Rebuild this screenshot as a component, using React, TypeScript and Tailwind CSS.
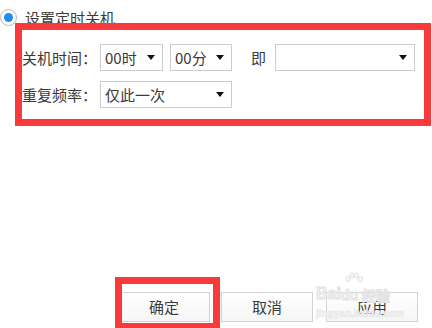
import React from "react";

const font = { fontFamily: '"Noto Sans CJK SC", "Noto Sans", sans-serif' };

function Arrow() {
  return (
    <svg width="8" height="5" viewBox="0 0 8 5" className="shrink-0">
      <path d="M0 0 H8 L4 5 Z" fill="#111" />
    </svg>
  );
}

function Select({ text, w }: { text: string; w: string }) {
  return (
    <div
      className={`${w} h-[27px] border border-[#cdcdcd] bg-white flex items-center justify-between pl-[4px] pr-[7px] text-[15px] text-[#3a3a3a]`}
    >
      <span className="leading-none">{text}</span>
      <Arrow />
    </div>
  );
}

function Btn({ label, cls }: { label: string; cls: string }) {
  return (
    <div
      className={`${cls} w-[92px] h-[30px] border border-[#d2d2d2] bg-gradient-to-b from-white to-[#f6f6f6] flex items-center justify-center text-[15px] text-[#3a3a3a]`}
    >
      {label}
    </div>
  );
}

export default function App() {
  const stroke = { WebkitTextStroke: "1px #e2e2e2" } as React.CSSProperties;
  return (
    <div
      className="relative w-[432px] h-[328px] bg-white overflow-hidden flex flex-col pt-[9px]"
      style={font}
    >
      {/* radio row */}
      <div className="flex items-center h-[17px]">
        <div className="w-[17px] h-[17px] rounded-full border border-[#b9b9b9] bg-white flex items-center justify-center">
          <div className="w-[9px] h-[9px] rounded-full bg-[#1c8ff0]" />
        </div>
        <span className="ml-[8px] text-[15px] text-[#3a3a3a] leading-none">设置定时关机</span>
      </div>

      {/* row 1 */}
      <div className="flex items-center h-[27px] mt-[18px] pl-[22px] text-[15px] text-[#3a3a3a]">
        <span className="w-[78px] leading-none">关机时间：</span>
        <Select text="00时" w="w-[63px]" />
        <div className="ml-[7px]">
          <Select text="00分" w="w-[62px]" />
        </div>
        <span className="ml-[19px] w-[24px] leading-none">即</span>
        <Select text="" w="w-[140px]" />
      </div>

      {/* row 2 */}
      <div className="flex items-center h-[28px] mt-[9px] pl-[22px] text-[15px] text-[#3a3a3a]">
        <span className="w-[78px] leading-none">重复频率：</span>
        <Select text="仅此一次" w="w-[132px]" />
      </div>

      {/* buttons */}
      <div className="mt-auto mb-[6px] flex h-[30px]">
        <Btn label="确定" cls="ml-[118px]" />
        <Btn label="取消" cls="ml-[11px]" />
        <Btn label="应用" cls="ml-[13px]" />
      </div>

      {/* watermark */}
      <div className="absolute left-[316px] top-[272px] pointer-events-none select-none">
        <svg width="20" height="14" viewBox="0 0 20 14" className="absolute left-[28px] top-0">
          <g fill="#f4f4f4" stroke="#e0e0e0" strokeWidth="0.8">
            <ellipse cx="4" cy="7" rx="2.2" ry="2.8" />
            <ellipse cx="8" cy="3.5" rx="2.2" ry="2.8" />
            <ellipse cx="12.5" cy="3.5" rx="2.2" ry="2.8" />
            <ellipse cx="16.5" cy="7" rx="2.2" ry="2.8" />
          </g>
        </svg>
        <div className="pt-[14px] flex items-end leading-none" style={{ fontFamily: '"Liberation Sans", sans-serif' }}>
          <span className="text-[16px] font-bold text-[#f5f5f5]" style={stroke}>Bai</span>
          <span className="text-[14px] font-bold text-[#f5f5f5]" style={stroke}>du</span>
          <span className="ml-[4px] text-[14px] font-bold text-[#f5f5f5]" style={{ ...stroke, fontFamily: '"Noto Sans CJK SC", sans-serif' }}>经验</span>
        </div>
        <div className="mt-[7px] text-[10px] font-bold text-[#f5f5f5] leading-none" style={{ WebkitTextStroke: "0.5px #e4e4e4", fontFamily: '"Liberation Sans", sans-serif' }}>
          jingyan.baidu.com
        </div>
      </div>

      {/* annotation boxes */}
      <div className="absolute left-[15px] top-[23px] w-[416px] h-[103px] border-[7px] border-[#f93a3a]" />
      <div className="absolute left-[115px] top-[277px] w-[105px] h-[53px] border-[7px] border-[#f93a3a]" />
    </div>
  );
}
